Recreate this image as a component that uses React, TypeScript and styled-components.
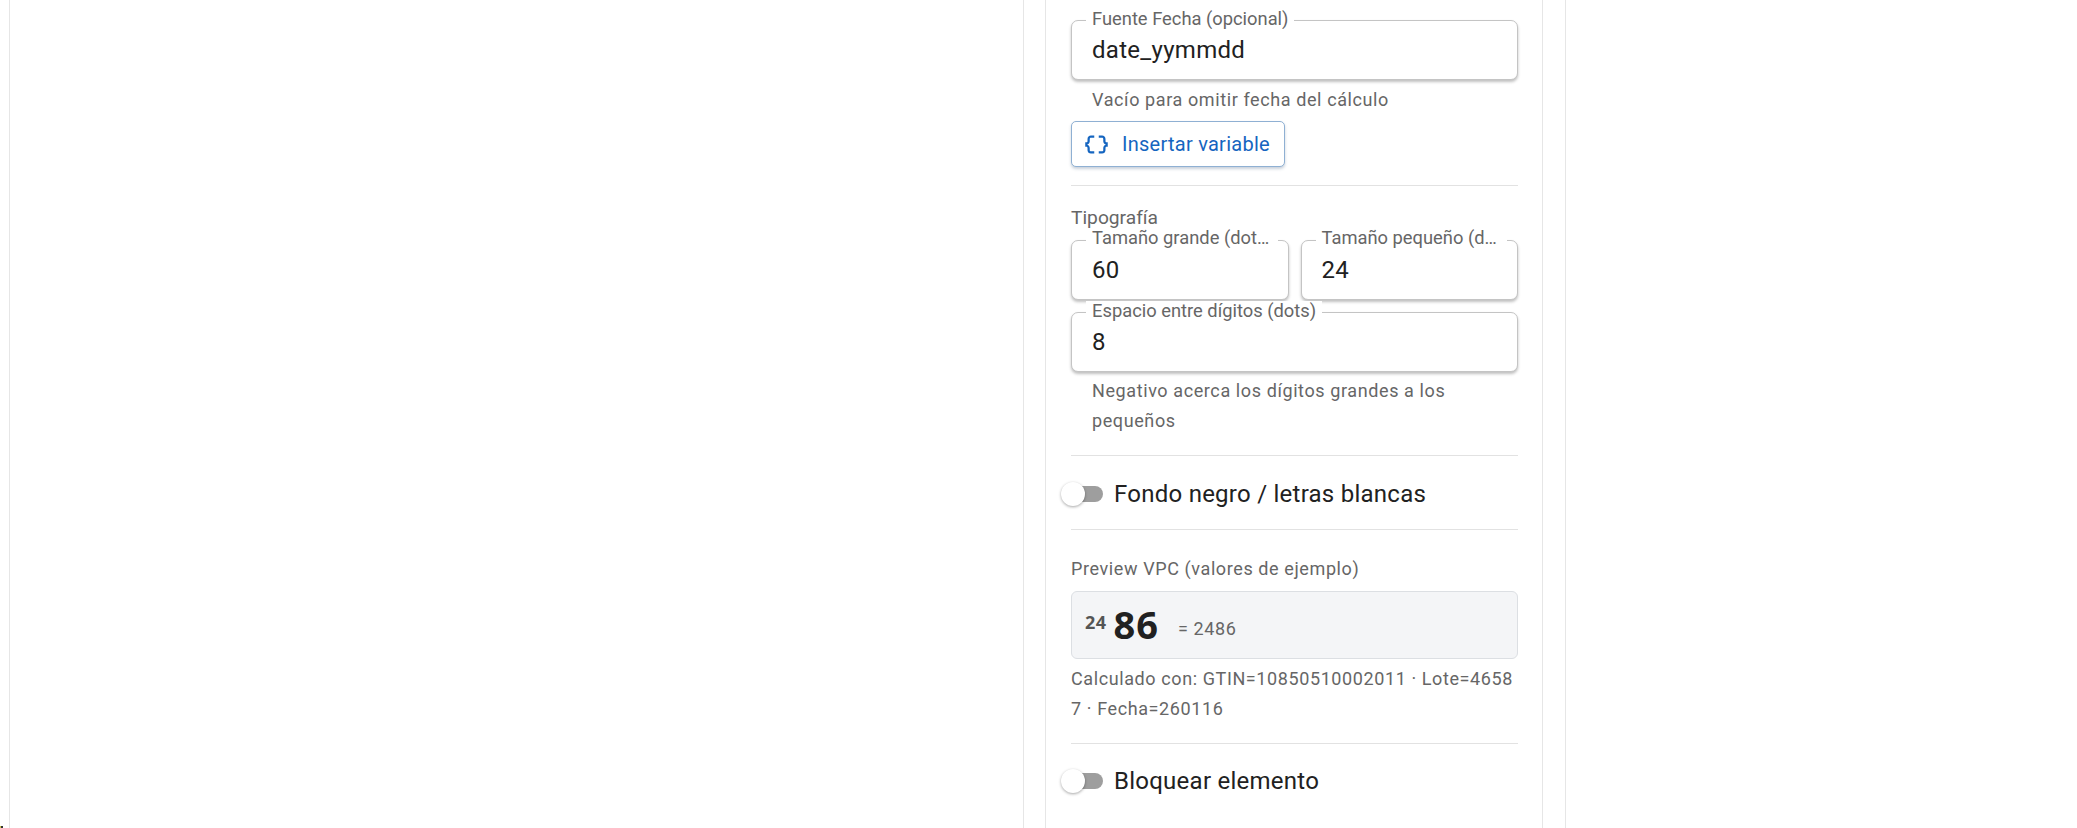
import React from 'react';
import styled, { createGlobalStyle } from 'styled-components';
import { MdDataObject } from 'react-icons/md';

const GlobalStyle = createGlobalStyle`
  html, body {
    margin: 0;
    padding: 0;
    height: 100%;
    overflow: hidden;
    background: #fff;
    font-family: Roboto, "Liberation Sans", sans-serif;
  }
`;

const Page = styled.div`
  display: flex;
  height: 828px;
  padding-left: 9px;
  overflow: hidden;
  position: relative;
  box-sizing: border-box;
`;

const CornerSpeck = styled.span`
  position: absolute;
  left: 0;
  bottom: 0;
  width: 3px;
  height: 2px;
  background: linear-gradient(to right, #c9c24a 33%, #333 33%);
`;

const Canvas = styled.div`
  width: 1015px;
  flex: none;
  box-sizing: border-box;
  border-left: 1px solid #e6e6e6;
  border-right: 1px solid #e6e6e6;
`;

const Sidebar = styled.aside`
  width: 542px;
  flex: none;
  box-sizing: border-box;
  padding: 0 22px 0 21px;
  border-right: 1px solid #e6e6e6;
`;

const Card = styled.section`
  box-sizing: border-box;
  height: 100%;
  padding: 20px 24px 0 25px;
  border-left: 1px solid #e6e6e6;
  border-right: 1px solid #e6e6e6;
`;

const FieldBox = styled.div<{ $grow?: boolean }>`
  position: relative;
  box-sizing: border-box;
  height: 60px;
  flex: ${(p) => (p.$grow ? '1 1 0' : 'none')};
  min-width: 0;
  display: flex;
  align-items: center;
  padding: 0 20px 1px;
  border: 1px solid #c4c4c4;
  border-radius: 7px;
  background: #fff;
  box-shadow: 0 2px 3px rgba(0, 0, 0, 0.25);
  font-size: 24px;
  letter-spacing: 0.3px;
  color: #212121;
`;

const FieldLabel = styled.span<{ $top?: number }>`
  position: absolute;
  top: ${(p) => p.$top ?? -12}px;
  left: 14px;
  max-width: calc(100% - 24px);
  box-sizing: border-box;
  padding: 0 6px;
  background: #fff;
  font-size: 18.33px;
  line-height: 20px;
  letter-spacing: 0;
  color: #666;
  white-space: nowrap;
  overflow: hidden;
  text-overflow: ellipsis;
`;

const Helper = styled.p<{ $top: number }>`
  margin: ${(p) => p.$top}px 0 0;
  padding: 0 21px;
  font-size: 18px;
  line-height: 30px;
  letter-spacing: 0.6px;
  color: #666;
`;

const OutlineButton = styled.button`
  display: inline-flex;
  align-items: center;
  gap: 12px;
  box-sizing: border-box;
  height: 46px;
  padding: 0 14px 0 11px;
  margin-top: 6px;
  border: 1px solid #8fb0d3;
  border-radius: 5px;
  background: #fff;
  box-shadow: 0 2px 3px rgba(40, 70, 110, 0.25);
  font: 400 20px Roboto, sans-serif;
  letter-spacing: 0.26px;
  color: #1565c0;
  svg {
    flex: none;
  }
`;

const Divider = styled.hr<{ $top: number; $bottom: number }>`
  margin: ${(p) => p.$top}px 0 ${(p) => p.$bottom}px;
  border: 0;
  border-top: 1px solid #e2e2e2;
`;

const SectionLabel = styled.div`
  font-size: 19.2px;
  line-height: 22px;
  color: #666;
`;

const FieldRow = styled.div<{ $top: number }>`
  display: flex;
  gap: 12px;
  margin-top: ${(p) => p.$top}px;
`;

const SwitchRow = styled.label`
  display: flex;
  align-items: center;
  height: 37px;
  font-size: 24px;
  letter-spacing: 0.25px;
  color: #212121;
`;

const SwitchControl = styled.span`
  position: relative;
  flex: none;
  width: 33px;
  height: 16px;
  margin: 0 11px 0 -1px;
  border-radius: 8px;
  background: #9e9e9e;
`;

const SwitchThumb = styled.span`
  position: absolute;
  left: -9px;
  top: -4px;
  width: 24px;
  height: 24px;
  border-radius: 50%;
  background: #fff;
  box-shadow: 0 1px 3px rgba(0, 0, 0, 0.35);
`;

const PreviewLabel = styled.div`
  font-size: 18px;
  line-height: 24px;
  letter-spacing: 0.6px;
  color: #666;
`;

const PreviewBox = styled.div`
  display: flex;
  align-items: center;
  box-sizing: border-box;
  height: 68px;
  margin-top: 10px;
  padding: 0 13px;
  border: 1px solid #dcdfe3;
  border-radius: 6px;
  background: #f4f5f7;
`;

const SmallDigits = styled.span`
  font-family: "Noto Sans", sans-serif;
  font-size: 18px;
  font-weight: 700;
  letter-spacing: 0.5px;
  color: #555;
  margin: -6px 7px 0 0;
`;

const BigDigits = styled.span`
  font-family: "Noto Sans", sans-serif;
  font-size: 38px;
  font-weight: 700;
  letter-spacing: 1px;
  color: #212121;
  margin-top: -2px;
`;

const ResultText = styled.span`
  font-size: 18px;
  letter-spacing: 0.6px;
  color: #666;
  margin: 7px 0 0 19px;
`;

const Note = styled.p`
  margin: 5px 0 0;
  font-size: 18px;
  line-height: 30px;
  letter-spacing: 0.6px;
  color: #666;
  word-break: break-all;
`;

const Switch = ({ label }: { label: string }) => (
  <SwitchRow>
    <SwitchControl>
      <SwitchThumb />
    </SwitchControl>
    {label}
  </SwitchRow>
);

const App = () => {
  return (
    <Page>
      <GlobalStyle />
      <CornerSpeck />
      <Canvas />
      <Sidebar>
        <Card>
          <FieldBox>
            <FieldLabel>Fuente Fecha (opcional)</FieldLabel>
            date_yymmdd
          </FieldBox>
          <Helper $top={5}>Vacío para omitir fecha del cálculo</Helper>
          <OutlineButton type="button">
            <MdDataObject size={27} />
            Insertar variable
          </OutlineButton>
          <Divider $top={18} $bottom={21} />
          <SectionLabel>Tipografía</SectionLabel>
          <FieldRow $top={11}>
            <FieldBox $grow>
              <FieldLabel $top={-13}>Tamaño grande (dots)</FieldLabel>
              60
            </FieldBox>
            <FieldBox $grow>
              <FieldLabel $top={-13}>Tamaño pequeño (dots)</FieldLabel>
              24
            </FieldBox>
          </FieldRow>
          <FieldRow $top={12}>
            <FieldBox $grow>
              <FieldLabel>Espacio entre dígitos (dots)</FieldLabel>
              8
            </FieldBox>
          </FieldRow>
          <Helper $top={4}>Negativo acerca los dígitos grandes a los pequeños</Helper>
          <Divider $top={19} $bottom={19} />
          <Switch label="Fondo negro / letras blancas" />
          <Divider $top={17} $bottom={27} />
          <PreviewLabel>Preview VPC (valores de ejemplo)</PreviewLabel>
          <PreviewBox>
            <SmallDigits>24</SmallDigits>
            <BigDigits>86</BigDigits>
            <ResultText>= 2486</ResultText>
          </PreviewBox>
          <Note>Calculado con: GTIN=10850510002011 · Lote=46587 · Fecha=260116</Note>
          <Divider $top={19} $bottom={18} />
          <Switch label="Bloquear elemento" />
        </Card>
      </Sidebar>
    </Page>
  );
};

export default App;
